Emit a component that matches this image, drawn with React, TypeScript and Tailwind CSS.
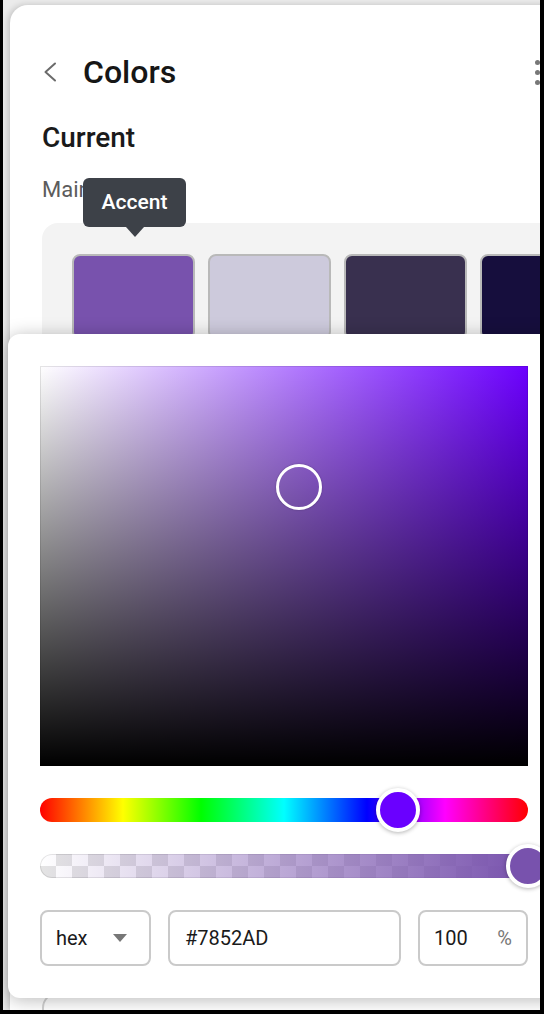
import React from 'react';

const SWATCHES = ['#7852ad', '#cdcadc', '#39304f', '#160e3d'];

// medium weight face, falls back to plain Roboto
const MEDIUM = "font-['Roboto_Medium','Roboto',sans-serif] font-medium";

export default function App() {
  return (
    <div className="w-[544px] h-[1014px] bg-black pl-[3px] pr-[4px] pb-[4px] font-['Roboto',sans-serif]">
      <div className="relative h-full overflow-hidden bg-[#ebebeb] pt-[5px] pl-[7px]">
        {/* page card */}
        <div className="h-full w-[560px] rounded-tl-[18px] bg-white pl-[32px] pt-[43px] shadow-[-2px_0_6px_rgba(0,0,0,0.18)]">
          <header className="flex h-[48px] items-center pr-[30px]">
            <svg width="14" height="20" viewBox="0 0 14 20" className="ml-[1px]">
              <polyline points="12,1.5 2.5,10 12,18.5" fill="none" stroke="#6b6b6b" strokeWidth="2" strokeLinecap="round" strokeLinejoin="round" />
            </svg>
            <h1 className={`ml-[26px] text-[32px] leading-none text-[#161616] ${MEDIUM}`}>Colors</h1>
            <div className="ml-auto flex flex-col gap-[5px]">
              <span className="h-[5px] w-[5px] rounded-full bg-[#777]" />
              <span className="h-[5px] w-[5px] rounded-full bg-[#777]" />
              <span className="h-[5px] w-[5px] rounded-full bg-[#777]" />
            </div>
          </header>

          <h2 className={`mt-[25px] text-[28px] leading-[34px] text-[#1a1a1a] ${MEDIUM}`}>Current</h2>
          <p className="mt-[21px] text-[22px] leading-[28px] text-[#5c5c5c]">Main</p>

          <div className="mt-[19px] flex gap-[13px] rounded-[16px] bg-[#f3f3f3] pl-[30px] pt-[31px] pb-[20px]">
            {SWATCHES.map(c => (
              <div key={c} className="h-[86px] w-[123px] shrink-0 rounded-[8px] border-2 border-[#b9b9b9]" style={{ backgroundColor: c }} />
            ))}
          </div>

          <div className="mt-[632px] h-[120px] w-[560px] rounded-[16px] border-2 border-[#d2d2d2]" />
        </div>

        {/* tooltip */}
        <div className="absolute left-[80px] top-[178px] flex flex-col items-center">
          <div className={`flex h-[49px] w-[103px] items-center justify-center rounded-[6px] bg-[#3d4148] text-[21px] text-white ${MEDIUM}`}>
            Accent
          </div>
          <div className="h-0 w-0 border-x-[9px] border-t-[10px] border-x-transparent border-t-[#3d4148]" />
        </div>

        {/* color picker popup */}
        <div className="absolute left-[5px] top-[334px] w-[560px] rounded-[12px] bg-white p-8 shadow-[0_2px_18px_rgba(0,0,0,0.28)]">
          <div className="relative h-[400px] w-[488px] bg-[linear-gradient(to_top,#000,transparent),linear-gradient(to_right,#fff,#6c00ff)] ring-1 ring-inset ring-black/10">
            <div className="absolute left-[236px] top-[98px] h-[46px] w-[46px] rounded-full border-[3px] border-white shadow-[0_0_2px_rgba(0,0,0,0.3)]" />
          </div>

          <div className="relative mt-8 h-6 w-[488px] rounded-full bg-[linear-gradient(to_right,#ff0000,#ffff00_17%,#00ff00_33%,#00ffff_50%,#0000ff_67%,#ff00ff_83%,#ff0000)]">
            <div className="absolute left-[336px] top-[-10px] h-[44px] w-[44px] rounded-full border-4 border-white bg-[#6a00ff] shadow-[0_1px_4px_rgba(0,0,0,0.3)]" />
          </div>

          <div className="relative mt-8 h-6 w-[488px]">
            <div className="absolute inset-0 overflow-hidden rounded-full bg-[repeating-conic-gradient(#e4e4e4_0%_25%,#ffffff_0%_50%)] bg-[length:32px_32px] bg-[position:0_-4px] ring-1 ring-inset ring-black/10">
              <div className="h-full w-full bg-[linear-gradient(to_right,rgba(120,82,173,0),#7852ad)]" />
            </div>
            <div className="absolute left-[466px] top-[-10px] h-[44px] w-[44px] rounded-full border-4 border-white bg-[#7852ad] shadow-[0_1px_4px_rgba(0,0,0,0.3)]" />
          </div>

          <div className="mt-8 flex gap-[17px] text-[20px] text-[#1a1a1a]">
            <div className="flex h-[56px] w-[111px] items-center rounded-[8px] border-2 border-[#cacaca] pl-[14px]">
              <span>hex</span>
              <svg width="14" height="8" viewBox="0 0 14 8" className="ml-auto mr-[22px]">
                <polygon points="0,0 14,0 7,8" fill="#777" />
              </svg>
            </div>
            <div className="flex h-[56px] w-[233px] items-center rounded-[8px] border-2 border-[#cacaca] pl-[15px]">
              #7852AD
            </div>
            <div className="flex h-[56px] w-[110px] items-center rounded-[8px] border-2 border-[#cacaca] pl-[14px] pr-[14px]">
              <span>100</span>
              <span className="ml-auto text-[#777]">%</span>
            </div>
          </div>
        </div>
      </div>
    </div>
  );
}
